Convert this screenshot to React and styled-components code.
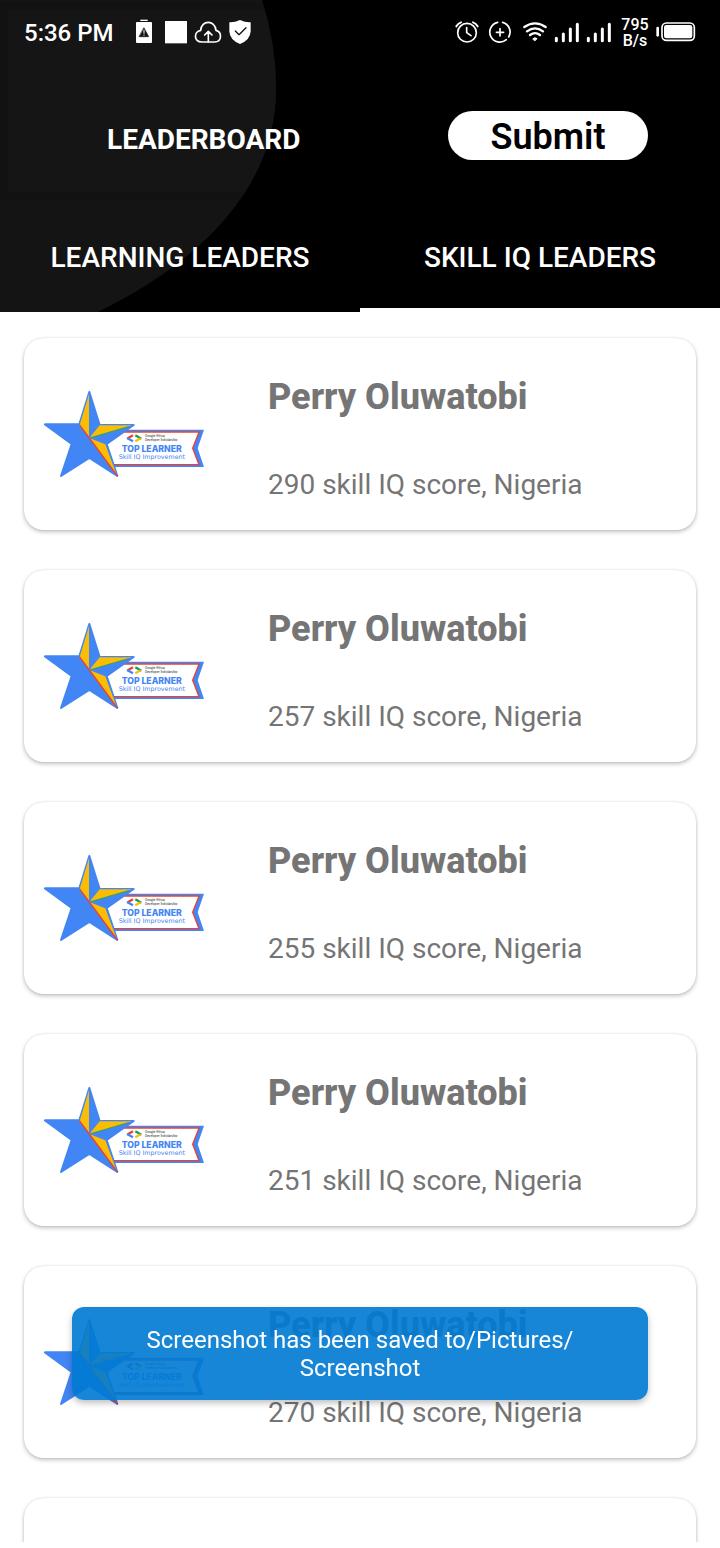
import React from "react";
import styled, { createGlobalStyle } from "styled-components";

const GlobalStyle = createGlobalStyle`
  * { box-sizing: border-box; }
  body { margin: 0; background: #fff; font-family: Roboto, "Liberation Sans", sans-serif; }
`;

const Screen = styled.div`
  display: flex;
  flex-direction: column;
  height: 100vh;
  padding-bottom: 6px;
  overflow: hidden;
`;

const Header = styled.header`
  position: relative;
  flex: none;
  background: #000;
  color: #fff;
`;

const Backdrop = styled.svg`
  position: absolute;
  top: 0;
  left: 0;
`;

const StatusBar = styled.div`
  position: relative;
  display: flex;
  align-items: center;
  justify-content: space-between;
  height: 64px;
  padding: 0 24px;
`;

const StatusGroup = styled.div`
  display: flex;
  align-items: center;
  gap: 4px;
`;

const Time = styled.time`
  margin-right: 12px;
  padding-top: 2px;
  font-size: 24px;
  line-height: 28px;
  font-weight: 500;
`;

const Speed = styled.div`
  width: 32px;
  padding: 2px 2px 0 0;
  font-size: 16px;
  line-height: 16px;
  font-weight: 500;
  text-align: center;
`;

const Glyph = styled.svg`
  display: block;
  flex: none;
  height: 28px;
  width: ${(p) => p.$width || 28}px;
  overflow: visible;
  fill: none;
  stroke-linecap: round;
  stroke-linejoin: round;
`;

const TitleRow = styled.div`
  position: relative;
  display: flex;
  align-items: center;
  justify-content: space-between;
  height: 142px;
  padding: 0 72px 0 107px;
`;

const Title = styled.h1`
  margin: 0;
  padding-top: 10px;
  font-size: 28px;
  line-height: 32px;
  font-weight: 700;
`;

const SubmitButton = styled.button`
  width: 200px;
  height: 49px;
  padding: 4px 0 0;
  border: 0;
  border-radius: 25px;
  background: #fff;
  color: #000;
  font: 600 36px/44px Roboto, "Liberation Sans", sans-serif;
`;

const Tabs = styled.div`
  position: relative;
  display: flex;
`;

const Tab = styled.button`
  flex: 1;
  height: 106px;
  padding: 2px 0 0;
  border: 0;
  border-bottom: 4px solid ${(p) => (p["aria-selected"] ? "#fff" : "transparent")};
  background: none;
  color: #fff;
  font: 500 28px/32px Roboto, "Liberation Sans", sans-serif;
`;

const List = styled.ul`
  flex: 1;
  min-height: 0;
  display: flex;
  flex-direction: column;
  gap: 40px;
  margin: 0;
  padding: 26px 24px;
  overflow-y: auto;
  scrollbar-width: none;
  list-style: none;
`;

const Card = styled.li`
  flex: none;
  display: flex;
  align-items: center;
  gap: 64px;
  min-height: 192px;
  padding: 0 20px;
  border-radius: 20px;
  background: #fff;
  box-shadow: 0 2px 4px rgba(0, 0, 0, 0.24), 0 0 2px rgba(0, 0, 0, 0.12);
`;

const Badge = styled.svg`
  flex: none;
  width: 160px;
  height: 88px;
`;

const Details = styled.div`
  display: flex;
  flex-direction: column;
  gap: 50px;
  padding-top: 8px;
  color: #757575;
`;

const Name = styled.h2`
  margin: 0;
  font-size: 36px;
  line-height: 44px;
  font-weight: 800;
`;

const Score = styled.p`
  margin: 0;
  font-size: 28px;
  line-height: 32px;
`;

const Toast = styled.div`
  position: fixed;
  right: 72px;
  bottom: 148px;
  left: 72px;
  padding: 19px 24px 18px;
  border-radius: 12px;
  background: rgba(0, 122, 211, 0.91);
  box-shadow: 0 3px 6px rgba(0, 0, 0, 0.25);
  color: #fff;
  font-size: 24px;
  line-height: 28px;
  text-align: center;
`;

function HeaderBackdrop() {
  const curve = "M0 0H262Q276 44 276 88C276 180 213 255 98 312H0Z";
  return (
    <Backdrop width="280" height="312" viewBox="0 0 280 312" aria-hidden="true">
      <clipPath id="curve"><path d={curve} /></clipPath>
      <g clipPath="url(#curve)">
        <rect width="280" height="312" fill="#141414" />
        <rect x="4" y="6" width="300" height="190" fill="none" stroke="#121212" strokeWidth="8" />
        <rect x="8" y="11" width="300" height="180" fill="#151515" />
      </g>
    </Backdrop>
  );
}

function BatteryAlert() {
  return (
    <Glyph viewBox="390 54 84 84" aria-hidden="true">
      <path d="M421 59h22v4h-22z" fill="#fff" />
      <rect x="408" y="66" width="48" height="63" rx="3" fill="#fff" />
      <path d="M432 84L446 110H418Z" fill="#141414" stroke="#141414" strokeWidth="2" />
      <path d="M432 91v9M432 105v1" stroke="#fff" strokeWidth="3" />
    </Glyph>
  );
}

function Square() {
  return (
    <Glyph viewBox="486 54 84 84" aria-hidden="true">
      <rect x="495" y="63" width="66" height="67" fill="#fff" />
    </Glyph>
  );
}

function CloudUpload() {
  return (
    <Glyph viewBox="582 54 84 84" stroke="#fff" strokeWidth="5" aria-hidden="true">
      <path d="M606 126C581 126 580 95 602 91C604 59 645 59 648 91C667 96 666 126 644 126Z" />
      <path d="M625 125V95M614 105L625 94L636 105" />
    </Glyph>
  );
}

function Shield() {
  return (
    <Glyph viewBox="678 54 84 84" aria-hidden="true">
      <path d="M720 60Q736 68 752 67V94Q751 120 720 132Q689 120 688 94V67Q704 68 720 60Z" fill="#fff" />
      <path d="M706 93L717 104L738 83" stroke="#141414" strokeWidth="4" />
    </Glyph>
  );
}

function Alarm() {
  return (
    <Glyph viewBox="48 54 84 84" stroke="#fff" strokeWidth="5" aria-hidden="true">
      <circle cx="81" cy="98" r="28" />
      <path d="M80 83V98L93 107" />
      <path d="M49 79Q54 70 63 67M113 79Q108 70 99 67" strokeWidth="6" />
    </Glyph>
  );
}

function DataSaver() {
  return (
    <Glyph viewBox="144 54 84 84" stroke="#fff" strokeWidth="5" aria-hidden="true">
      <path d="M173 67A30 30 0 1 0 199 119" />
      <path d="M188 67A30 30 0 0 1 206 111" />
      <path d="M180 86V108M169 97H191" />
    </Glyph>
  );
}

function Wifi() {
  return (
    <Glyph viewBox="240 54 96 84" $width={32} stroke="#fff" strokeWidth="7" aria-hidden="true">
      <path d="M253 81Q285 59 317 81" />
      <path d="M261 94Q285 76 309 94" />
      <path d="M270 105Q285 94 300 105" />
      <path d="M279 116Q285 110 291 116L285 122Z" fill="#fff" strokeWidth="3" />
    </Glyph>
  );
}

function Signal() {
  return (
    <Glyph viewBox="348 54 84 84" stroke="#fff" strokeWidth="9" aria-hidden="true">
      <path d="M349 115V122M370 102V122M391 87V122M412 73V122" />
    </Glyph>
  );
}

function Battery() {
  return (
    <Glyph viewBox="648 54 120 84" $width={40} aria-hidden="true">
      <path d="M653 84V106" stroke="#fff" strokeWidth="8" />
      <rect x="666" y="69" width="97" height="52" rx="13" stroke="#fff" strokeWidth="5" />
      <rect x="672" y="75" width="85" height="40" rx="7" fill="#fff" />
    </Glyph>
  );
}

function SkillBadge() {
  return (
    <Badge viewBox="72 180 480 264" role="img" aria-label="Top learner badge">
      <path d="M270 299H552L533 355L552 411H270Z" fill="#4285f4" />
      <path d="M240 306H537L518 355L537 404H240Z" fill="#fff" stroke="#ea4335" strokeWidth="4" />
      <path d="M208 186L239 285H341L260 342L292 438L208 384L123 438L155 342L75 283H178Z" fill="#4285f4" stroke="#4285f4" strokeWidth="6" strokeLinejoin="round" />
      <path d="M207 192V322L179 285Z" fill="#fbbc04" />
      <path d="M239 286H336L208 324Z" fill="#fbbc04" />
      <path d="M208 324L256 343L290 434Z" fill="#fbbc04" />
      <path d="M208 324L326 290" stroke="#34a853" strokeWidth="3" />
      <path d="M178 284L208 324L292 438" fill="none" stroke="#ea4335" strokeWidth="4" />
      <g fill="none" strokeWidth="7">
        <path d="M339 316L323 325" stroke="#ea4335" />
        <path d="M321 324L339 334" stroke="#4285f4" />
        <path d="M346 316L364 326" stroke="#0f9d58" />
        <path d="M362 325L346 334" stroke="#fbbc04" />
      </g>
      <g fontFamily="Inter, sans-serif" fontSize="9" fontWeight="500" fill="#333">
        <text x="375" y="320">Google Africa</text>
        <text x="375" y="333">Developer Scholarship</text>
      </g>
      <text x="305" y="366" fontFamily="Inter, sans-serif" fontSize="26" fontWeight="800" fill="#4285f4">TOP LEARNER</text>
      <text x="296" y="386" fontFamily="DejaVu Sans, sans-serif" fontSize="19" fill="#4285f4">Skill IQ Improvement</text>
    </Badge>
  );
}

const leaders = [
  { name: "Perry Oluwatobi", score: 290, country: "Nigeria" },
  { name: "Perry Oluwatobi", score: 257, country: "Nigeria" },
  { name: "Perry Oluwatobi", score: 255, country: "Nigeria" },
  { name: "Perry Oluwatobi", score: 251, country: "Nigeria" },
  { name: "Perry Oluwatobi", score: 270, country: "Nigeria" },
];

export default function App() {
  return (
    <Screen>
      <GlobalStyle />
      <Header>
        <HeaderBackdrop />
        <StatusBar>
          <StatusGroup>
            <Time>5:36 PM</Time>
            <BatteryAlert />
            <Square />
            <CloudUpload />
            <Shield />
          </StatusGroup>
          <StatusGroup>
            <Alarm />
            <DataSaver />
            <Wifi />
            <Signal />
            <Signal />
            <Speed>795<br />B/s</Speed>
            <Battery />
          </StatusGroup>
        </StatusBar>
        <TitleRow>
          <Title>LEADERBOARD</Title>
          <SubmitButton type="button">Submit</SubmitButton>
        </TitleRow>
        <Tabs role="tablist">
          <Tab type="button" role="tab" aria-selected={false}>LEARNING LEADERS</Tab>
          <Tab type="button" role="tab" aria-selected={true}>SKILL IQ LEADERS</Tab>
        </Tabs>
      </Header>
      <List>
        {leaders.map((leader) => (
          <Card key={leader.score}>
            <SkillBadge />
            <Details>
              <Name>{leader.name}</Name>
              <Score>{leader.score} skill IQ score, {leader.country}</Score>
            </Details>
          </Card>
        ))}
        <Card aria-hidden="true" />
      </List>
      <Toast role="status">
        Screenshot has been saved to/Pictures/<br />Screenshot
      </Toast>
    </Screen>
  );
}
